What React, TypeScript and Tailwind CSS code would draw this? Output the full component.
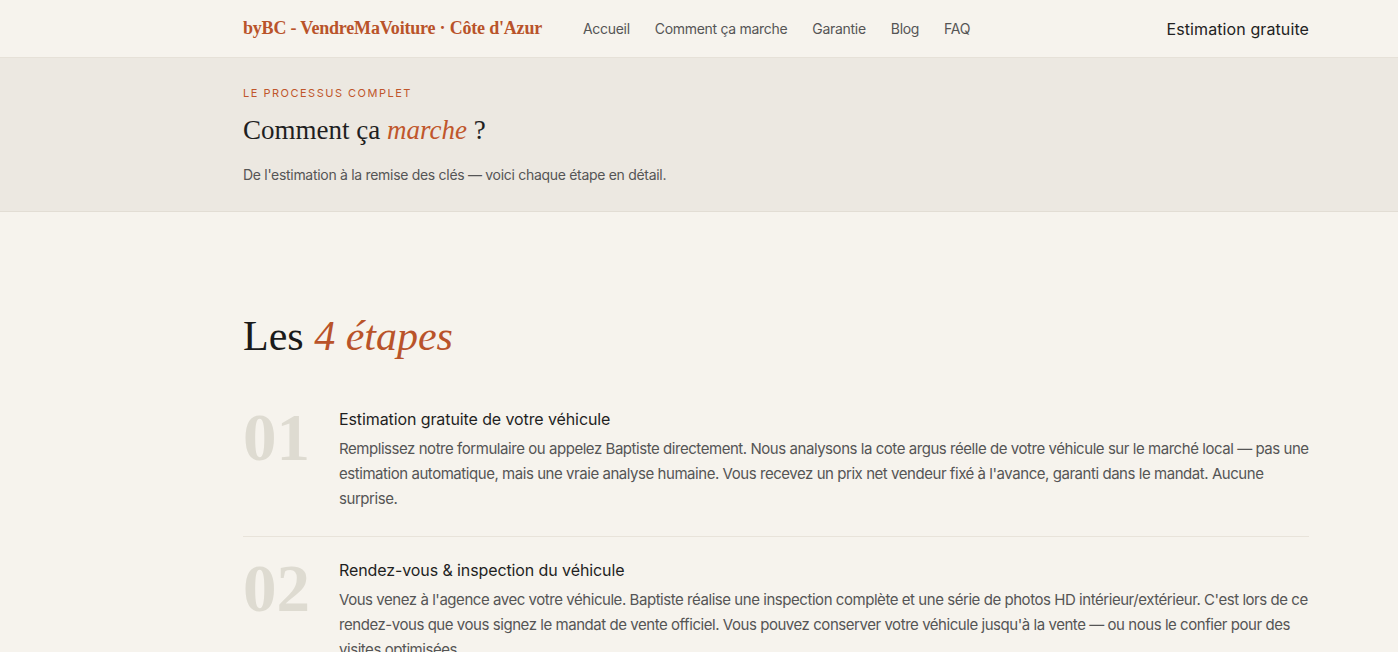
import React from "react";

const sans = { fontFamily: "Inter, 'Noto Sans', sans-serif" };
const serif = { fontFamily: "'Liberation Serif', 'DejaVu Serif', serif" };

interface Step {
  num: string;
  title: string;
  body: string;
}

const steps: Step[] = [
  {
    num: "01",
    title: "Estimation gratuite de votre véhicule",
    body: "Remplissez notre formulaire ou appelez Baptiste directement. Nous analysons la cote argus réelle de votre véhicule sur le marché local — pas une estimation automatique, mais une vraie analyse humaine. Vous recevez un prix net vendeur fixé à l'avance, garanti dans le mandat. Aucune surprise.",
  },
  {
    num: "02",
    title: "Rendez-vous & inspection du véhicule",
    body: "Vous venez à l'agence avec votre véhicule. Baptiste réalise une inspection complète et une série de photos HD intérieur/extérieur. C'est lors de ce rendez-vous que vous signez le mandat de vente officiel. Vous pouvez conserver votre véhicule jusqu'à la vente — ou nous le confier pour des visites optimisées.",
  },
];

const navLinks = ["Accueil", "Comment ça marche", "Garantie", "Blog", "FAQ"];

export default function App() {
  return (
    <div className="min-h-screen bg-[#f6f3ed] text-[#222]" style={sans}>
      {/* Header */}
      <header className="h-[58px] border-b border-[#e6e1d8] bg-[#f6f3ed]">
        <div className="flex h-full items-center pl-[243px] pr-[89px]">
          <div
            className="text-[18px] font-bold tracking-[-0.2px] text-[#b9532a]"
            style={serif}
          >
            byBC - VendreMaVoiture · Côte d'Azur
          </div>
          <nav className="ml-[41px] flex items-center gap-[25px] text-[14px] tracking-[-0.3px] text-[#555]">
            {navLinks.map((l) => (
              <a key={l} href="#">
                {l}
              </a>
            ))}
          </nav>
          <a href="#" className="ml-auto text-[16px] tracking-[0.1px] text-[#222]">
            Estimation gratuite
          </a>
        </div>
      </header>

      {/* Hero band */}
      <section className="h-[154px] border-b border-[#e2ddd4] bg-[#ece8e1]">
        <div className="pl-[243px] pr-[89px] pt-[27px]">
          <div className="text-[11px] uppercase tracking-[1.5px] text-[#c0562b]">
            Le processus complet
          </div>
          <h1
            className="mt-[11px] text-[27px] leading-[34px] text-[#1f1f1f]"
            style={serif}
          >
            Comment ça <em className="text-[#c0562b]">marche</em> ?
          </h1>
          <p className="mt-[17px] text-[14px] tracking-[-0.3px] text-[#555]">
            De l'estimation à la remise des clés — voici chaque étape en détail.
          </p>
        </div>
      </section>

      {/* Steps */}
      <main className="pl-[243px] pr-[89px] pt-[96px]">
        <h2 className="text-[42px] leading-[56px] text-[#1a1a1a]" style={serif}>
          Les <em className="text-[#b9532a]">4 étapes</em>
        </h2>
        <div className="mt-[43px]">
          {steps.map((s, i) => (
            <div
              key={s.num}
              className={`flex gap-[28px] ${i > 0 ? "border-t border-[#e8e3da] pt-[21px]" : ""} pb-[25px]`}
            >
              <div
                className="w-[68px] shrink-0 text-[67px] font-bold leading-[60px] text-[#dedbd1]"
                style={serif}
              >
                {s.num}
              </div>
              <div className="flex-1">
                <h3 className="text-[16px] leading-[24px] tracking-[-0.1px] text-[#1f1f1f]">
                  {s.title}
                </h3>
                <p className="mt-[5px] text-[15px] leading-[25px] tracking-[-0.45px] text-[#555]">
                  {s.body}
                </p>
              </div>
            </div>
          ))}
        </div>
      </main>
    </div>
  );
}
